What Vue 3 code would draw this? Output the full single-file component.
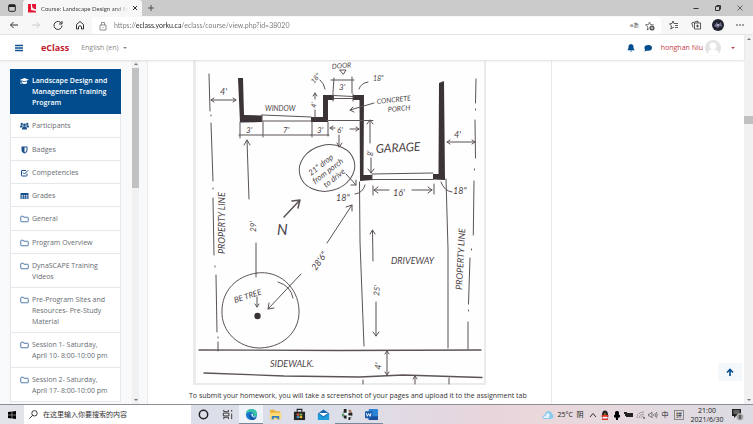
<script setup>
import { ref } from 'vue'

const url = ref('https://eclass.yorku.ca/eclass/course/view.php?id=38020')
const query = ref('')

const sections = [
  { icon: 'cap', label: 'Landscape Design and Management Training Program', active: true },
  { icon: 'users', label: 'Participants' },
  { icon: 'shield', label: 'Badges' },
  { icon: 'check', label: 'Competencies' },
  { icon: 'table', label: 'Grades' },
  { icon: 'folder', label: 'General' },
  { icon: 'folder', label: 'Program Overview' },
  { icon: 'folder', label: 'DynaSCAPE Training Videos' },
  { icon: 'folder', label: 'Pre-Program Sites and Resources- Pre-Study Material' },
  { icon: 'folder', label: 'Session 1- Saturday, April 10- 8:00-10:00 pm' },
  { icon: 'folder', label: 'Session 2- Saturday, April 17- 8:00-10:00 pm' }
]

const apps = [
  { icon: 'cortana', name: 'Cortana' },
  { icon: 'taskview', name: 'Task view' },
  { icon: 'edge', name: 'Edge', running: true, focused: true },
  { icon: 'files', name: 'File Explorer' },
  { icon: 'store', name: 'Store' },
  { icon: 'mail', name: 'Mail' },
  { icon: 'design', name: 'Design', running: true },
  { icon: 'word', name: 'Word', running: true }
]

const tray = ['up', 'penguin', 'mic', 'battery', 'wifi', 'volume']
</script>

<template>
  <div class="screen">
    <svg class="sprite" aria-hidden="true">
      <symbol id="cap" viewBox="0 0 18 14"><path fill="currentColor" d="M9 1 0 4.500l9 3.500 9-3.500zM4 7.500V11c2 2.500 8 2.500 10 0V7.500L9 9.500zM1.500 5.500h1V11l.8 2H.7l.8-2z" /></symbol>
      <symbol id="users" viewBox="0 0 18 14"><g fill="currentColor"><circle cx="9" cy="5" r="2.800" /><circle cx="3.500" cy="3" r="2.300" /><circle cx="14.500" cy="3" r="2.300" /><path d="M4 13c0-4 2-5 5-5s5 1 5 5c0 1-1 1-2 1H6c-1 0-2 0-2-1zM0 9c0-3 1-3.500 5-3.500L5.500 8 3 10H1c-1 0-1-.5-1-1zM18 9c0-3-1-3.500-5-3.500L12.500 8l2.500 2h2c1 0 1-.5 1-1z" /></g></symbol>
      <symbol id="shield" viewBox="0 0 18 14"><path fill="currentColor" fill-rule="evenodd" d="M3 0h12v7c0 4-3 6-6 7-3-1-6-3-6-7zM9 2v10c2-1 4-2.500 4-5V2z" /></symbol>
      <symbol id="check" viewBox="0 0 18 14"><path fill="none" stroke="currentColor" stroke-width="2" d="M14 8v4q0 1-1 1H4q-1 0-1-1V3q0-1 1-1h8M6 6l3 3 7-7" /></symbol>
      <symbol id="table" viewBox="0 0 18 14"><path fill="currentColor" fill-rule="evenodd" d="M1 1h16v12H1zM3 5v1.500h3V5zm4.500 0v1.500h3V5zM12 5v1.500h3V5zM3 8v1.300h3V8zm4.500 0v1.300h3V8zM12 8v1.300h3V8zM3 10.700V12h3v-1.300zm4.500 0V12h3v-1.300zm4.500 0V12h3v-1.300z" /></symbol>
      <symbol id="folder" viewBox="0 0 18 14"><path fill="none" stroke="currentColor" stroke-width="1.500" d="M1.500 11V3q0-1.500 1.500-1.500h3.500q1 0 1.200 2H15q1.500 0 1.500 1.500v6.500q0 1-1.500 1H3q-1.500 0-1.500-1.500z" /></symbol>

      <symbol id="cortana" viewBox="0 0 14 14"><circle cx="7" cy="7" r="4.500" fill="none" stroke="#222" stroke-width="1.600" /></symbol>
      <symbol id="taskview" viewBox="0 0 14 14"><path fill="none" stroke="#333" d="M3 2v2h5V2M3 12v-2h5v2M2.500 5.500h6v3h-6zM11.500 2v2M11.500 6v6" /></symbol>
      <symbol id="edge" viewBox="0 0 14 14"><circle cx="7" cy="7" r="6" fill="#1b78cf" /><path fill="#38c6a4" d="M1 7C1 3 4 1 7 1c4 0 6 3 6 5.500S11 9 9.500 9C10 6 8 4 6 4 3.500 4 2 5 1 7z" /><path fill="#1254a0" d="M6 5.500C4 7 4 12 8 13c2 0 3.500-1 4.500-3-3 1-6 0-6.500-2z" /><path fill="#e8f5fa" d="M7 6c1.500 0 2 1.500 1.500 2.500 1 1.500 3 1 4 .5-2 2.500-6 1-5.500-3z" /></symbol>
      <symbol id="files" viewBox="0 0 14 14"><path fill="#e9af3b" d="M1 2h5l1 1.500h5V12H1z" /><path fill="#ffd973" d="M1 5h12v7H1z" /><path fill="#347fc0" d="M3 8.500h8V12H9v-1.500H5V12H3z" /></symbol>
      <symbol id="store" viewBox="0 0 14 14"><path fill="#252525" d="M1 4h12v9H1z" /><path fill="none" stroke="#252525" stroke-width="1.200" d="M4.500 4V1.500h5V4" /><path fill="#ed5a3d" d="M4 6h2.700v2.200H4z" /><path fill="#7ab53c" d="M7.200 6h2.700v2.200H7.200z" /><path fill="#3b9bdb" d="M4 8.700h2.700v2.200H4z" /><path fill="#f1bd35" d="M7.200 8.700h2.700v2.200H7.200z" /></symbol>
      <symbol id="mail" viewBox="0 0 14 14"><path fill="#1466ad" d="m1 6 6-4.500L13 6v7H1z" /><path fill="#fff" d="M2 5.500h10L7 9z" /><path fill="#219cda" d="m1 6 6 4 6-4v7H1z" /></symbol>
      <symbol id="design" viewBox="0 0 14 14"><circle cx="7" cy="7" r="5.500" fill="#8b9194" /><path fill="#e6eef0" d="M6 1h2v3l4-1-3 4 4 2-4 1-1 3H6v-3l-4 1 2-4-3-1 4-2z" /><path fill="#222" d="M3 1h3v4H3zM8 5h4v3H8zM3 8h3v3H3zM8 10h2v3H8z" /><path fill="#ad6942" d="M9 2h2v3H9z" /><path fill="#4f9c65" d="M1 6h2v3H1z" /></symbol>
      <symbol id="word" viewBox="0 0 14 14"><rect x="4" y="1" width="10" height="12" rx="1" fill="#2c84d8" /><path fill="#164f9e" d="M4 9h10v3q0 1-1 1H4z" /><rect y="3.500" width="8" height="7.500" rx="1" fill="#1659aa" /><path fill="none" stroke="#fff" d="m1.500 5.500 1 3.500L4 6l1.500 3 1-3.500" /></symbol>

      <symbol id="up" viewBox="0 0 10 10"><path fill="none" stroke="#333" d="m2 7 3-3.500L8 7" /></symbol>
      <symbol id="penguin" viewBox="0 0 10 10"><ellipse cx="5" cy="5" rx="3" ry="4.500" fill="#222" /><ellipse cx="5" cy="7.500" rx="2.500" ry="2" fill="#fff" /><path fill="#d9362b" d="M1.500 5h7v1.800h-7z" /><path fill="#d9362b" d="M2 8.500h6V10H2z" /><path fill="#f2a22e" d="M4 3.500h2v1H4z" /></symbol>
      <symbol id="mic" viewBox="0 0 10 10"><rect x="3" y="1" width="4" height="5.500" rx="1.500" /><path d="M2 5h6v2L6 8v2H4V8L2 7z" /></symbol>
      <symbol id="battery" viewBox="0 0 10 10"><path fill="#222" d="M2 3h7v4H2zM1 4h1v2H1zM0 2h3v2H0z" /></symbol>
      <symbol id="wifi" viewBox="0 0 10 10"><path fill="none" stroke="#888" stroke-width=".8" d="M1 8c0-4 3-6 7-6M3 8c0-2 2-4 5-4M5 8c0-1 1-2 3-2" /><circle cx="8" cy="8" r="1" fill="#666" /></symbol>
      <symbol id="volume" viewBox="0 0 10 10"><path fill="none" stroke="#666" stroke-width=".8" d="M.5 4h1.500l2-2v6L2 6H.5zM5.500 4q1 1 0 2M7 3q1.700 2 0 4M8.300 2q2 3 0 6" /></symbol>
    </svg>

    <div class="tabs">
      <button class="tab-menu" aria-label="Tab actions">
        <svg viewBox="0 0 8 8"><rect x=".7" y=".7" width="6.600" height="6.600" rx="1" fill="none" stroke="#222" /><path fill="#222" d="M1 1h6v2H1z" /></svg>
      </button>
      <div class="tab">
        <svg class="favicon" viewBox="0 0 9 9"><path fill="#e31837" d="M0 0h3v6l5 1v1.500H0zM4 0h4v5.500L4 4z" /><path stroke="#fff" stroke-width=".7" d="m3 1 2 4" /></svg>
        <span class="tab-title">Course: Landscape Design and M</span>
        <button aria-label="Close tab"><svg class="x" viewBox="0 0 6 6"><path stroke="#333" d="m1 1 4 4M5 1 1 5" /></svg></button>
      </div>
      <button class="plus" aria-label="New tab"><svg class="x" viewBox="0 0 6 6"><path stroke="#333" stroke-width=".8" d="M3 0v6M0 3h6" /></svg></button>
      <div class="window-buttons">
        <button aria-label="Minimize"><svg class="x" viewBox="0 0 6 6"><path stroke="#333" d="M.5 3.500h5" /></svg></button>
        <button aria-label="Restore"><svg class="x" viewBox="0 0 6 6"><path fill="none" stroke="#333" d="M.5 1.500h4v4h-4zM1.500.5h4v4" /></svg></button>
        <button aria-label="Close"><svg class="x" viewBox="0 0 6 6"><path stroke="#333" stroke-width=".7" d="m.5.5 5 5M5.500.5l-5 5" /></svg></button>
      </div>
    </div>

    <div class="toolbar">
      <div class="nav">
        <button aria-label="Back"><svg viewBox="0 0 10 10"><path fill="none" stroke="#333" d="M9 5H1.500M4.500 2l-3 3 3 3" /></svg></button>
        <button aria-label="Forward"><svg viewBox="0 0 10 10"><path fill="none" stroke="#ccc" d="M1 5h7.500M5.500 2l3 3-3 3" /></svg></button>
        <button aria-label="Refresh"><svg viewBox="0 0 10 10"><path fill="none" stroke="#333" d="M8.500 3.500A4 4 0 1 0 9 5.500M9 1v3H6" /></svg></button>
        <button aria-label="Home"><svg viewBox="0 0 10 10"><path fill="none" stroke="#333" d="m1.500 4.500 3.500-3 3.500 3V9H6.500V6.500q-1.500-1.500-3 0V9h-2z" /></svg></button>
      </div>
      <div class="address">
        <svg viewBox="0 0 10 10"><path fill="none" stroke="#777" stroke-width=".8" d="M2 4h6v5H2zM3.500 4V1.500h3V4M5 6v1" /></svg>
        <input v-model="url" aria-label="Address" />
        <button class="reader" aria-label="Read aloud">aあ</button>
        <button aria-label="Add favourite"><svg viewBox="0 0 10 10"><path fill="none" stroke="#555" stroke-width=".8" d="m4.500 1 1 2.500 3 .3M4.500 1l-1 2.500-3 .3L3 6 2 9l2.500-1.500" /><circle cx="7" cy="7" r="2.500" fill="#444" /><path stroke="#fff" stroke-width=".7" d="M7 5.500v3M5.500 7h3" /></svg></button>
      </div>
      <div class="actions">
        <button aria-label="Favourites"><svg viewBox="0 0 10 10"><path fill="none" stroke="#333" stroke-width=".8" d="m4 1 1 2.500h4M4 1 3 3.500l-2.500.3L2.500 6l-.7 3L5 7M6 5.500h3M6 7.500h3" /></svg></button>
        <button aria-label="Collections"><svg viewBox="0 0 10 10"><path fill="none" stroke="#333" stroke-width=".8" d="M3.500 3h6v6h-6zM2 7.500.8 3 7 1v2M6.500 4.500v3M5 6h3" /></svg></button>
        <button aria-label="Profile"><svg class="profile" viewBox="0 0 12 12"><circle cx="6" cy="6" r="6" fill="#20222e" /><path fill="#6d7196" d="m2 7 3-4 1 3 3-3 1 5-2-1-2 2z" /><path fill="#b6a9b4" d="M5 5h2v2H5z" /></svg></button>
        <button aria-label="More"><svg viewBox="0 0 10 10"><g fill="#333"><circle cx="2" cy="5" r=".8" /><circle cx="5" cy="5" r=".8" /><circle cx="8" cy="5" r=".8" /></g></svg></button>
      </div>
    </div>

    <div class="viewport">
      <div class="site">
        <header class="site-header">
          <button class="burger" aria-label="Side panel"><svg viewBox="0 0 8 8"><path stroke="#0f5293" stroke-width="1.400" d="M0 1.500h8M0 4h8M0 6.500h8" /></svg></button>
          <a class="brand" href="#">eClass</a>
          <button class="lang">English (en) <i class="caret"></i></button>
          <div class="user">
            <button aria-label="Notifications"><svg viewBox="0 0 8 8"><path fill="#004c8c" d="M4 0c2 .3 2.500 1.500 2.500 3S7 5.500 8 6.300H0C1 5.500 1.500 4.500 1.500 3S2 .3 4 0zM3 6.700h2Q4 9 3 6.700z" /></svg></button>
            <button aria-label="Messages"><svg viewBox="0 0 8 8"><ellipse cx="4.200" cy="3.800" rx="3.800" ry="2.900" fill="#004c8c" /><path fill="#004c8c" d="M1.500 5 .3 7.700 4 6z" /></svg></button>
            <button class="account">honghan Niu
              <svg viewBox="0 0 16 16"><circle cx="8" cy="8" r="8" fill="#e4e4e4" /><circle cx="8" cy="6" r="3.400" fill="#fff" /><path fill="#fff" d="M2.500 14C3 10 5 9.500 8 9.500s5 .5 5.500 4.500Q8 18 2.500 14z" /></svg>
              <i class="caret"></i>
            </button>
          </div>
        </header>

        <div class="columns">
          <nav class="drawer">
            <a v-for="item in sections" :key="item.label" href="#" class="item" :class="{ active: item.active }">
              <svg><use :href="'#' + item.icon" /></svg>
              <span>{{ item.label }}</span>
            </a>
          </nav>
          <div class="scroll drawer-scroll"><i class="arrow-up"></i><i class="thumb"></i><i class="arrow-down"></i></div>

          <main class="card">
            <svg class="plan" viewBox="193 60 293 325" role="img" aria-label="Site plan sketch">
              <path fill="#fefefe" d="M193 60h293v325H193z" />
              <path fill="#ebebeb" d="M193 60h3v325h-3zM484 60h2v325h-2zM193 383h293v2H193z" />
              <g fill="#3b3335">
                <path d="M238 78h5l1 37 18 .5v6.500l-22 .5zM311 117h12V95h11v5h-6v22h-17zM353 95h11l-.5 80H372v5l-12 1-.5-81H353zM439 83l5-2 1 99-12-.5V174h5.500z" />
                <circle cx="257.500" cy="316" r="3.200" />
              </g>
              <g class="ink">
                <path d="m209 74 1 37M211 115v1M211 123l2 58M213 188v1M213 198l1 57M215 266v1M216 275l1 57M218 337v1M218 342v9" />
                <path d="m476 79-.5 24M475.500 109v1M475 120l.5 38M474.500 169v1M474 181l-.7 54M471.500 249v1M470 258l-1.500 46M468.500 310v1M468 322v27" />
                <path d="M211 100h25M214 98l-3 2 3 2M233 98l3 2-3 2M447 142h28M450 140l-3 2 3 2M472 140l3 2-3 2" />
                <path d="m262 115 49 2M262 121h49M333 95.500l20 1M333 98.500h20M333 93v8M353 94v7M327 120.500h46M372 174l61-1M372 179.500h61M372 175v5M262 115v6" />
                <path d="M240 122v16M239 135h24M263 122v15M264 135h47M312 122v15M311 135h18M328 122v14" />
                <path d="M330 128h5M333 126l-3 2 3 2M350 129h9M356 127l3 2-3 2" />
                <path d="M315 93v6M313 96l2-3 2 3M315 110v8M331 80h23M334 78l-1 14M352 77v16M340 70h6l-2.500 4zM320 80q4 3 5 9M368 82q-7 1-9 7M374 103l-24 7M353 107l-3 3 4 2" />
                <path d="M339 135v12M337 143l2.500 4 2.500-4" />
                <ellipse cx="327" cy="168" rx="28" ry="23" transform="rotate(-14 327 168)" />
                <path d="m346 174 10 11M356 180v5h-5M365 185q-2 8-10 9M441 182q3 9 11 10" />
                <path d="M370 120v23M367 124l3-4 3 4M371 158v15M368 169l3 4 3-4" />
                <path d="M374 190h15M378 187l-4 3 4 3M373 186v9M412 190h20M428 187l4 3-4 3M434 184v10" />
                <path d="m359.500 182 .5 60 4 104M446 179l2 70v99" />
                <path d="m373 261-.5-31M370 234l2.500-4 2.500 4M376 302v34M373 332l3 4 3-4" />
                <path d="m247 140 2 59M244 145l3-5 3 5M256 243v34" />
                <path stroke-width="1.500" d="m284 217 16-17M292 201l8-1-2 8" />
                <path d="m352 205-25 38M346 207l6-2v6M301 274l-33 35M269 303l-1 6 6-1" />
                <path d="M257 273c21-3 41 13 42 37 1 19-13 37-39 38-22 0-39-17-38-37 0-20 14-35 35-38M278 282q13 4 15 16" />
                <path d="M257 297v10M255 304l2 3 2-3" />
                <path stroke-width="1.300" d="m199 350 140 .5 142-.5M204 373l80 3 76 1 43-2 79 2.500" />
                <path d="M387 351v24M385 354l2-3 2 3M385 372l2 3 2-3M363 380v4M415 376v8M413 379l2-3 2 3M449 378v6" />
              </g>
              <g class="hand">
                <text class="s8" transform="translate(332 69) rotate(-5)">DOOR</text>
                <text class="s8" transform="translate(314 84) rotate(-50)">18"</text>
                <text class="s9" x="339" y="90">3'</text>
                <text class="s10" x="220" y="95">4'</text>
                <text class="s8" x="265" y="111">WINDOW</text>
                <text class="s8" transform="translate(316 108) rotate(-85)">4'</text>
                <text class="s9" x="246" y="133">3'</text>
                <text class="s9" x="283" y="133">7'</text>
                <text class="s9" x="317" y="133">3'</text>
                <text class="s9" x="337" y="133">6'</text>
                <text class="s9" transform="translate(311 176) rotate(-38)">21" drop</text>
                <text class="s9" transform="translate(315 184) rotate(-37)">from porch</text>
                <text class="s9" transform="translate(326 188) rotate(-38)">to drive</text>
                <text class="s10" x="336" y="201">18"</text>
                <text class="s8" transform="translate(377 104) rotate(-6)">CONCRETE</text>
                <text class="s8" transform="translate(388 112) rotate(-5)">PORCH</text>
                <text class="s8" x="373" y="81">18"</text>
                <text class="s12" transform="translate(376 153) rotate(-3)">GARAGE</text>
                <text class="s8" transform="translate(373 156) rotate(-90)">8'</text>
                <text class="s10" x="454" y="138">4'</text>
                <text class="s10" x="393" y="196">16'</text>
                <text class="s10" x="453" y="194">18"</text>
                <text class="s10" x="391" y="264">DRIVEWAY</text>
                <text class="s9" transform="translate(379 296) rotate(-85)">25'</text>
                <text class="s10" transform="translate(462 290) rotate(-87)">PROPERTY LINE</text>
                <text class="s10" transform="translate(225 254) rotate(-90)">PROPERTY LINE</text>
                <text class="s9" transform="translate(256 232) rotate(-90)">29'</text>
                <text class="s14" x="277" y="235">N</text>
                <text class="s10" transform="translate(316 271) rotate(-55)">28'6"</text>
                <text class="s9" transform="translate(235 303) rotate(-18)">BE TREE</text>
                <text class="s10" x="270" y="367">SIDEWALK.</text>
                <text class="s10" transform="translate(381 370) rotate(-85)">4'</text>
              </g>
            </svg>
            <p>To submit your homework, you will take a screenshot of your pages and upload it to the assignment tab</p>
          </main>

          <aside class="side">
            <button class="to-top" aria-label="Back to top"><svg viewBox="0 0 8 8"><path fill="none" stroke="#004c8c" stroke-width="1.600" d="M4 8V1.500M1 4.500l3-3 3 3" /></svg></button>
          </aside>
        </div>
      </div>
      <div class="scroll page-scroll"><i class="arrow-up"></i><i class="thumb"></i><i class="arrow-down"></i></div>
    </div>

    <footer class="taskbar">
      <button class="start" aria-label="Start"><svg viewBox="0 0 8 8"><path d="m0 1 3.700-.5v3.300H0zM4.200.4 8 0v3.800H4.200zM0 4.300h3.700v3.300L0 7.100zM4.200 4.300H8V8l-3.800-.4z" /></svg></button>
      <label class="search">
        <svg viewBox="0 0 9 9"><g fill="none" stroke="#222" stroke-width=".9"><circle cx="5.500" cy="3.300" r="2.700" /><path d="M3.600 5.300.5 8.500" /></g></svg>
        <input v-model="query" placeholder="在这里输入你要搜索的内容" aria-label="搜索" />
      </label>
      <div class="apps">
        <button v-for="app in apps" :key="app.icon" :aria-label="app.name" :class="{ running: app.running, focused: app.focused }">
          <svg><use :href="'#' + app.icon" /></svg>
        </button>
      </div>
      <div class="tray">
        <button class="weather">
          <svg viewBox="0 0 12 10"><path fill="#8ec9ee" d="M3 9Q0 9 .5 6.500 1 5 3 5q0-4 4-4 2.500 0 3 3 2 .5 1.500 3Q11 9 9 9z" /><path fill="#e2f4ff" d="M3 8q-2 0-1.500-1.500L4 6q0-3 3-3 1 2 0 5z" /></svg>
          25°C&nbsp; 阴
        </button>
        <button v-for="name in tray" :key="name" class="tray-icon" :aria-label="name"><svg><use :href="'#' + name" /></svg></button>
        <button class="tray-icon">中</button>
        <button class="ime"><span>拼</span></button>
        <button class="clock"><span>21:00</span><span>2021/6/30</span></button>
        <button class="notes" aria-label="Notifications">
          <svg viewBox="0 0 13 13"><path fill="#222" d="M1 1h9v7H5l-2 2V8H1z" /><path stroke="#ddd" stroke-width=".7" d="M2.500 3h6M2.500 5h6" /><circle cx="9" cy="9" r="3.500" fill="#999" stroke="#ddd" stroke-width=".6" /><path stroke="#222" d="M9 7v4" /></svg>
        </button>
      </div>
    </footer>
  </div>
</template>

<style>
body { overflow: hidden; }
</style>

<style scoped>
.screen {
  height: 100vh;
  display: grid;
  grid-template-rows: 16px 19px minmax(0, 1fr) 20px;
  font: 7px/11px "Open Sans", "Noto Sans CJK SC", sans-serif;
  color: #444;
  background: #fff;
  overflow: hidden;
}
.screen * { box-sizing: border-box; }
.sprite { position: absolute; width: 0; height: 0; }
button, input { font: inherit; color: inherit; border: 0; padding: 0; margin: 0; background: none; outline: 0; }
button { display: flex; align-items: center; justify-content: center; }
a { color: inherit; text-decoration: none; }
svg { display: block; flex: none; }

.tabs { display: flex; background: #cbcbcb; }
.tab-menu { width: 23px; }
.tab-menu svg { width: 8px; height: 8px; }
.tab { display: flex; align-items: center; gap: 4px; padding: 0 4px 0 5px; background: #f7f7f7; border-radius: 3px 3px 0 0; }
.favicon { width: 9px; height: 9px; }
.tab-title { white-space: nowrap; font-family: Lato, sans-serif; font-size: 6px; -webkit-mask-image: linear-gradient(to right, #000 85%, transparent); mask-image: linear-gradient(to right, #000 85%, transparent); }
.x { width: 6px; height: 6px; }
.plus { width: 17px; }
.window-buttons { display: flex; margin-left: auto; padding-right: 2px; }
.window-buttons button { width: 22px; }

.toolbar { display: flex; align-items: center; background: #f7f7f7; border-bottom: 1px solid #e6e6e6; }
.toolbar svg { width: 10px; height: 10px; }
.nav { display: flex; width: 92px; padding-left: 3px; }
.nav button { width: 22px; }
.address { flex: 1; display: flex; align-items: center; align-self: stretch; gap: 6px; margin-top: 1px; padding: 0 6px; background: #fff; border-radius: 3px; }
.address input {
  flex: 1;
  min-width: 0;
  font-family: Lato, sans-serif;
  font-size: 7px;
  color: transparent;
  background: linear-gradient(to right, #777 22px, #222 22px 67px, #777 67px);
  -webkit-background-clip: text;
  background-clip: text;
}
.reader { font-size: 6px; color: #555; }
.actions { display: flex; width: 92px; padding-left: 2px; }
.actions button { width: 22px; }
.toolbar .profile { width: 12px; height: 12px; }

.viewport { display: flex; min-height: 0; }
.site { flex: 1; min-width: 0; display: flex; flex-direction: column; }
.site-header { display: flex; align-items: center; height: 25px; flex: none; padding: 0 9px 0 15px; box-shadow: 0 1px 2px #ddd; z-index: 1; }
.burger svg { width: 8px; height: 8px; }
.brand { margin-left: 18px; font-size: 9px; font-weight: 700; color: #c3202f; }
.lang { margin-left: 12px; gap: 4px; color: #888; }
.caret { border: 2px solid transparent; border-top-color: currentColor; border-bottom: 0; }
.user { display: flex; align-items: center; gap: 9px; margin-left: auto; }
.user svg { width: 8px; height: 8px; }
.account { color: #c6404c; gap: 2px; }
.account svg { width: 16px; height: 16px; }
.account .caret { margin-left: 8px; }

.columns { flex: 1; min-height: 0; display: grid; grid-template-columns: 132px 7px minmax(0, 1fr) 192px; background: #f8f9fb; }
.drawer { display: flex; flex-direction: column; padding: 9px 11px 2px 10px; min-height: 0; }
.item {
  flex: 1 0 auto;
  display: flex;
  gap: 3px;
  padding: 6px 10px 5px 9px;
  color: #686c72;
  background: #fff;
  border: solid #e6e8eb;
  border-width: 0 1px 1px;
}
.item svg { width: 9px; height: 8px; margin-top: 2px; color: #1b518c; }
.item.active { color: #fff; background: #004c8c; border-color: #004c8c; font-weight: 600; }
.item.active svg { color: #fff; }

.scroll { display: flex; flex-direction: column; align-items: center; background: #f1f1f1; padding: 2px 0; }
.arrow-up, .arrow-down { border: 2px solid transparent; }
.arrow-up { border-bottom-color: #777; border-top: 0; margin-top: 1px; }
.arrow-down { border-top-color: #777; border-bottom: 0; margin-top: auto; margin-bottom: 1px; }
.thumb { width: 100%; background: #c1c1c1; }
.drawer-scroll .thumb { height: 120px; margin-top: 3px; }
.page-scroll { width: 9px; }
.page-scroll .thumb { height: 8px; margin-top: 76px; }

.card { margin-left: 8px; padding: 0 26px 0 41px; background: #fff; border: solid #e8eaec; border-width: 0 1px; overflow: hidden; }
.plan { width: 293px; max-width: 100%; margin-left: 4px; }
.card p { margin: 5px 0 0; white-space: nowrap; color: #333; }
.ink { fill: none; stroke: #5b5356; stroke-width: 1; stroke-linecap: round; stroke-linejoin: round; }
.hand { fill: #4b4346; font-family: Lato, sans-serif; font-style: italic; }
.s8 { font-size: 7px; }
.s9 { font-size: 8px; }
.s10 { font-size: 9px; }
.s12 { font-size: 12px; }
.s14 { font-size: 15px; }
.side { display: flex; align-items: flex-end; justify-content: flex-end; padding: 0 2px 23px 0; background: #fff; }
.to-top { width: 24px; height: 18px; background: #f5f8fb; }
.to-top svg { width: 8px; height: 8px; }

.taskbar { display: flex; border-top: 1px solid #8c8c92; background: linear-gradient(to right, #dcdfea 0 45%, #e8d5dc 65%, #ead8dc 72%, #dcdbe3); color: #222; }
.start { width: 24px; background: #e3e3ea; }
.start svg { width: 8px; height: 8px; }
.search { display: flex; align-items: center; gap: 5px; width: 167px; padding-left: 5px; background: #fff; }
.search svg { width: 9px; height: 9px; }
.search input { flex: 1; min-width: 0; }
.search input::placeholder { color: #333; opacity: 1; }
.apps { display: flex; }
.apps button { width: 24px; border-bottom: 1px solid transparent; }
.apps svg { width: 13px; height: 13px; }
.apps .running { border-color: #77889b; }
.apps .focused { background: #f0f3f7; }
.tray { display: flex; align-items: center; margin-left: auto; }
.weather { gap: 3px; width: 48px; }
.weather svg { width: 12px; height: 10px; }
.tray-icon { width: 12px; }
.tray-icon svg { width: 10px; height: 10px; }
.ime { width: 16px; }
.ime span { padding: 0 1px; line-height: 8px; border: 1px solid #888; font-size: 6px; }
.clock { width: 40px; flex-direction: column; line-height: 9px; }
.notes { width: 20px; margin-right: 6px; }
.notes svg { width: 13px; height: 13px; }
</style>
